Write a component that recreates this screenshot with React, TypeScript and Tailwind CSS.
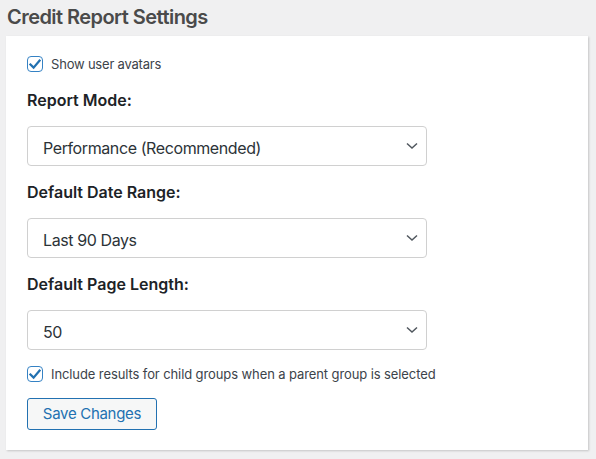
import React from "react";

function Check() {
  return (
    <span className="flex h-[16px] w-[16px] shrink-0 items-center justify-center rounded-[4px] border border-[#3582c4] bg-white">
      <svg width="15" height="15" viewBox="0 0 20 20">
        <path d="M3.5 10 L8 14.5 L16.5 4.5" fill="none" stroke="#2271b1" strokeWidth="3.2" strokeLinecap="square" />
      </svg>
    </span>
  );
}

function Select({ value }: { value: string }) {
  return (
    <div className="flex h-[40px] w-[400px] items-center justify-between rounded-[4px] border border-[#d0d0d0] bg-white pl-[15px] pr-[8px] text-[16px] tracking-[-0.4px] text-[#2c3338]">
      <span className="pt-[3px]">{value}</span>
      <svg width="12" height="8" viewBox="0 0 12 8">
        <path d="M1 1.5 L6 6 L11 1.5" fill="none" stroke="#50575e" strokeWidth="1.5" />
      </svg>
    </div>
  );
}

function Label({ children }: { children: React.ReactNode }) {
  return <div className="h-[24px] text-[16px] font-semibold leading-[24px] text-[#1d2327]">{children}</div>;
}

export default function App() {
  return (
    <div
      className="flex h-[459px] w-full flex-col bg-[#f0f0f1]"
      style={{ fontFamily: "Inter, 'Noto Sans', sans-serif" }}
    >
      <h2 className="h-[36px] pl-[7px] pt-[5px] text-[20px] font-semibold leading-[24px] tracking-[-0.55px] text-[#4a4a4a]">
        Credit Report Settings
      </h2>
      <div className="ml-[6px] flex w-[582px] flex-col bg-white pb-[20px] pl-[21px] pt-[20px] shadow-[1px_1px_2px_rgba(0,0,0,0.18)]">
        <div className="flex h-[16px] items-center gap-[8px]">
          <Check />
          <span className="pt-[2px] text-[13px] tracking-[-0.2px] text-[#3c434a]">Show user avatars</span>
        </div>
        <div className="mt-[16px]">
          <Label>Report Mode:</Label>
        </div>
        <div className="mt-[14px]">
          <Select value="Performance (Recommended)" />
        </div>
        <div className="mt-[14px]">
          <Label>Default Date Range:</Label>
        </div>
        <div className="mt-[14px]">
          <Select value="Last 90 Days" />
        </div>
        <div className="mt-[14px]">
          <Label>Default Page Length:</Label>
        </div>
        <div className="mt-[14px]">
          <Select value="50" />
        </div>
        <div className="mt-[16px] flex h-[16px] items-center gap-[8px]">
          <Check />
          <span className="pt-[1px] text-[13px] tracking-[-0.1px] text-[#3c434a]">Include results for child groups when a parent group is selected</span>
        </div>
        <div className="mt-[16px]">
          <button className="h-[32px] w-[130px] rounded-[3px] border border-[#2271b1] bg-[#f6f7f7] text-[15px] tracking-[-0.3px] text-[#2271b1]">
            Save Changes
          </button>
        </div>
      </div>
    </div>
  );
}
